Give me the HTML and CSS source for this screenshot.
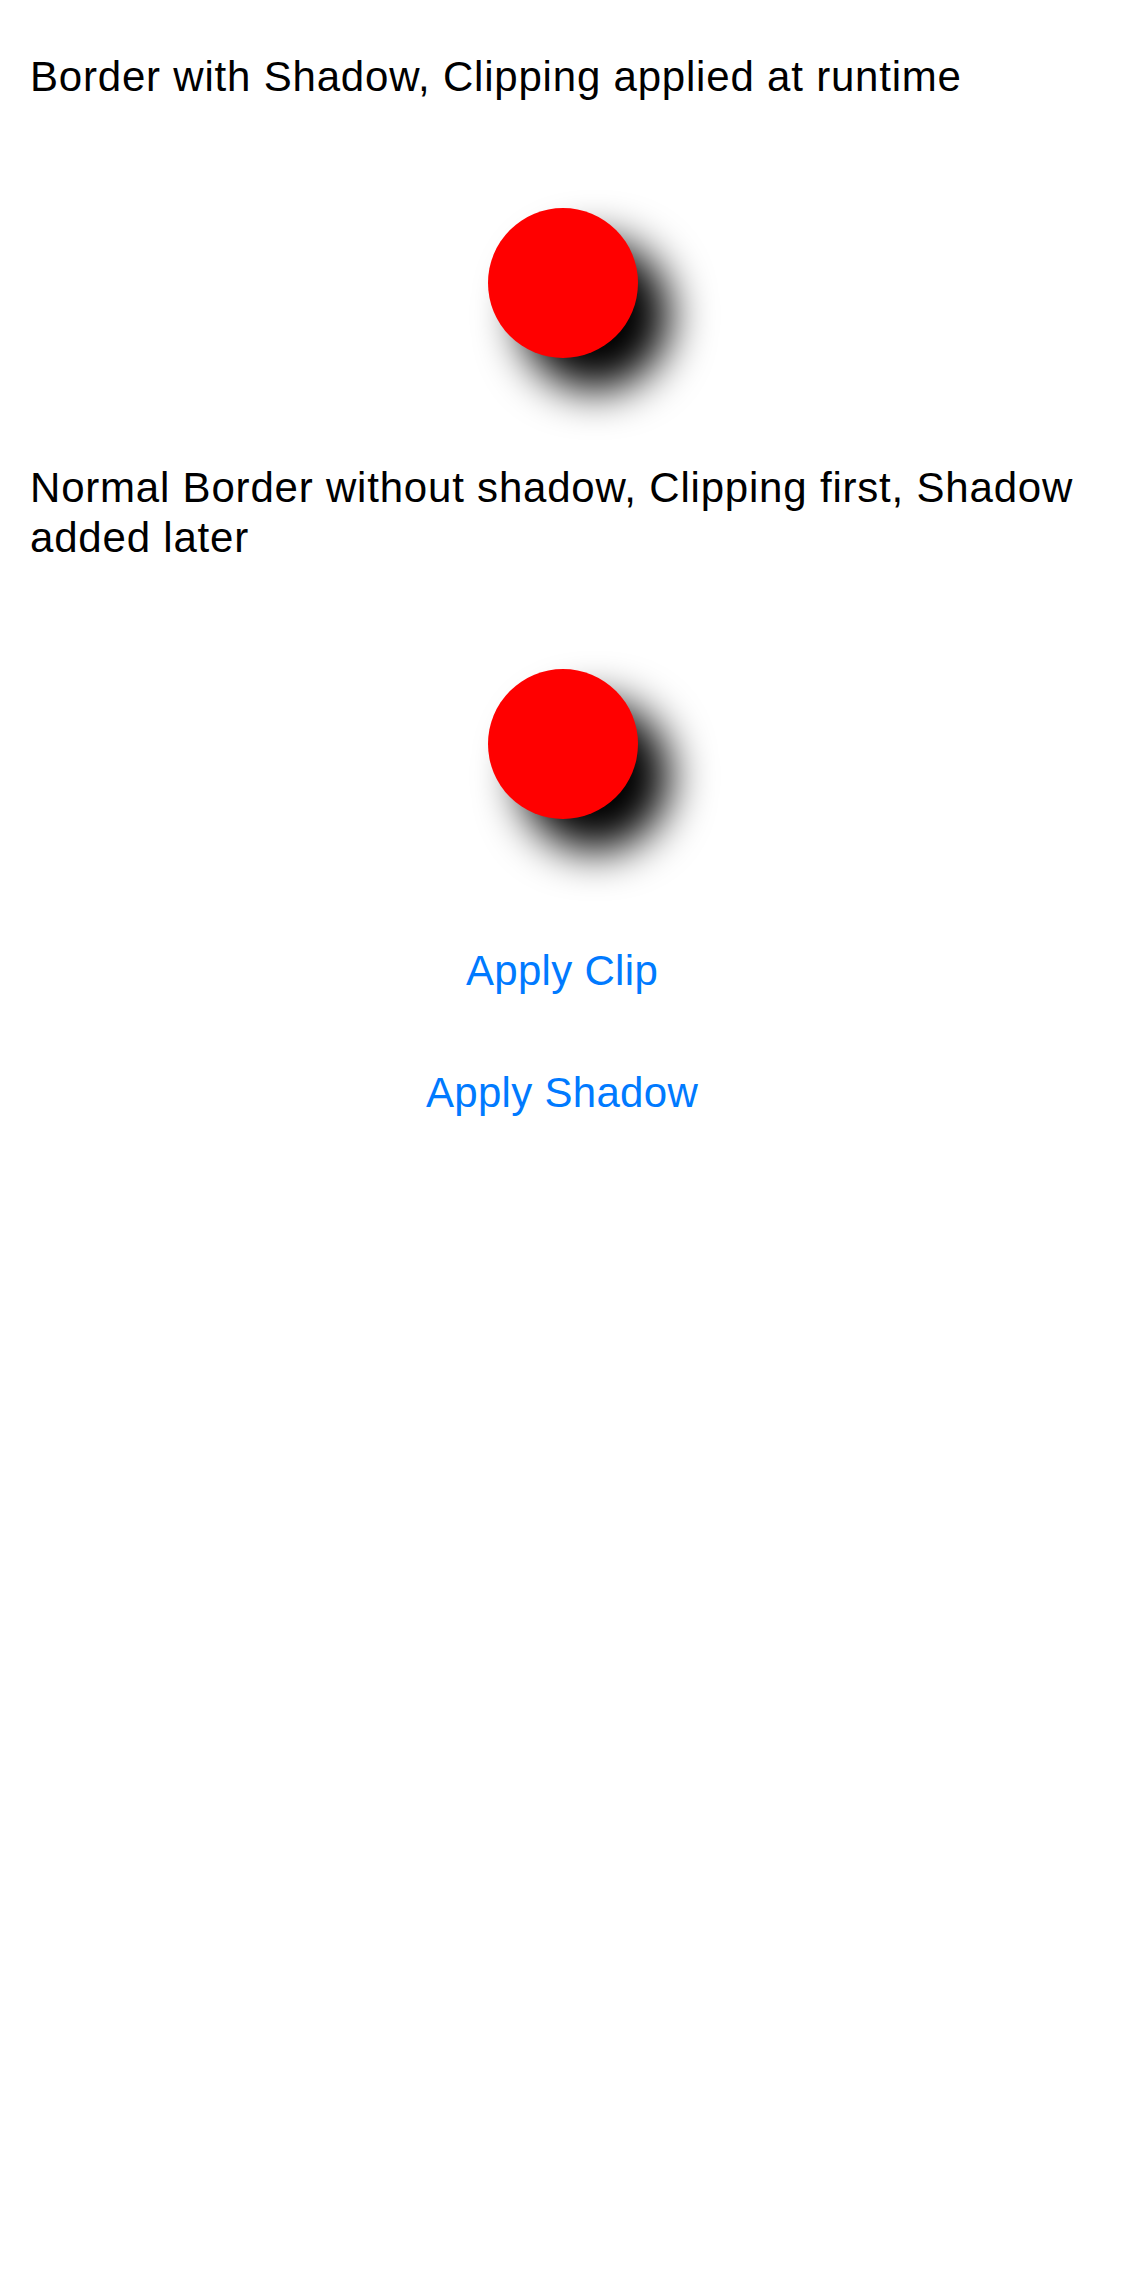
FILE: index.html
```html
<!DOCTYPE html>
<html lang="en">
<head>
<meta charset="utf-8">
<title>Shadow and Clipping</title>
<link rel="stylesheet" href="styles.css">
</head>
<body>
<main class="screen">
  <p class="label">Border with Shadow, Clipping applied at runtime</p>
  <div class="dot-row"><div class="dot"></div></div>
  <p class="label">Normal Border without shadow, Clipping first, Shadow added later</p>
  <div class="dot-row"><div class="dot"></div></div>
  <div class="actions">
    <button class="link-btn" type="button">Apply Clip</button>
    <button class="link-btn" type="button">Apply Shadow</button>
  </div>
</main>
</body>
</html>
```
FILE: styles.css
```css
html, body {
  margin: 0;
  padding: 0;
  background: #ffffff;
}

.screen {
  box-sizing: border-box;
  width: 1124px;
  min-height: 2286px;
  padding: 52px 30px 0 30px;
  display: flex;
  flex-direction: column;
  font-family: "Liberation Sans", Arial, sans-serif;
  color: #000000;
}

.label {
  margin: 0;
  font-size: 42px;
  line-height: 50px;
  letter-spacing: 0.8px;
}

.dot-row {
  display: flex;
  justify-content: center;
  padding: 106px 0 105px 0;
}

.dot {
  width: 150px;
  height: 150px;
  border-radius: 50%;
  background: #ff0000;
  box-shadow: 32px 32px 44px #000000;
  margin-left: 2px;
}

.actions {
  display: flex;
  flex-direction: column;
  align-items: center;
  gap: 72px;
  padding-top: 22px;
}

.link-btn {
  border: none;
  background: none;
  padding: 0;
  margin: 0;
  font-family: "Liberation Sans", Arial, sans-serif;
  font-size: 42px;
  line-height: 50px;
  letter-spacing: 0.3px;
  color: #007aff;
  cursor: pointer;
}
```
